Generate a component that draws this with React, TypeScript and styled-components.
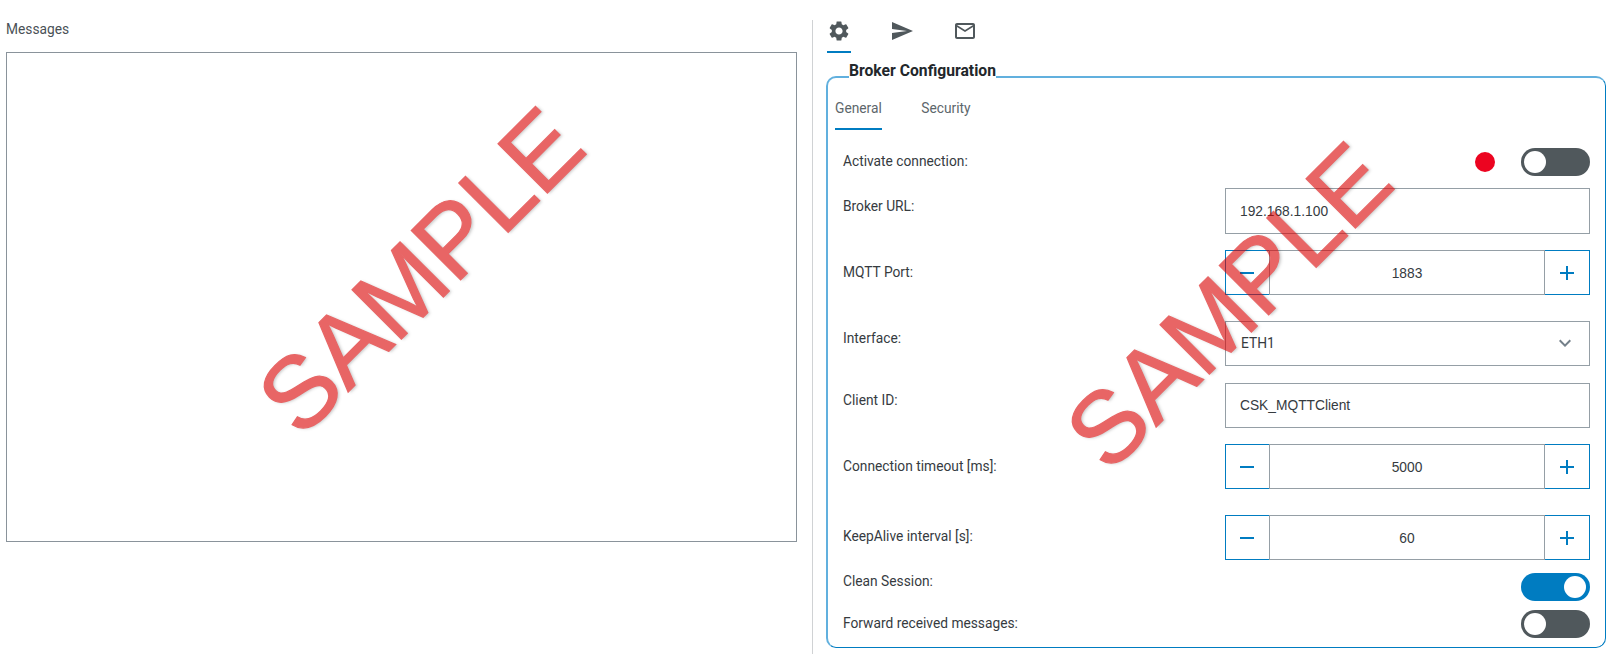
import React from "react";
import styled, { createGlobalStyle } from "styled-components";
import {
  MdAdd,
  MdExpandMore,
  MdMailOutline,
  MdRemove,
  MdSend,
  MdSettings,
} from "react-icons/md";

const BLUE = "#007cc1";
const SLATE = "#50585c";
const BORDER = "#959fa6";

const GlobalStyle = createGlobalStyle`
  *, *::before, *::after { box-sizing: border-box; }
  body {
    margin: 0;
    background: #fff;
    color: #363b3f;
    font: 13.77px/20px Roboto, "Liberation Sans", sans-serif;
  }
`;

const Page = styled.main`
  position: relative;
  display: flex;
  width: 1610px;
  height: 660px;
  overflow: hidden;
`;

const MessagesPane = styled.section`
  width: 797px;
  padding: 18px 0 0 6px;
`;

const MessagesTitle = styled.div`
  height: 34px;
  padding-top: 1px;
  color: #4a5156;
`;

const MessagesBox = styled.div`
  height: 490px;
  border: 1px solid #8a939b;
`;

const SettingsPane = styled.section`
  width: 794px;
  height: 634px;
  margin: 20px 0 0 15px;
  padding-left: 14px;
  border-left: 1px solid #d0d2d4;
`;

const IconTabs = styled.nav`
  display: flex;
  gap: 39px;
  height: 33px;
`;

const IconTab = styled.div<{ $active?: boolean }>`
  display: flex;
  width: 24px;
  height: 33px;
  border-bottom: 2px solid ${(p) => (p.$active ? BLUE : "transparent")};
  color: ${SLATE};
  svg {
    width: 24px;
    height: 24px;
    margin-top: -0.6px;
  }
`;

const Panel = styled.fieldset`
  height: 588px;
  margin: 7px 0 0 -1px;
  padding: 0 15px 0 7px;
  border: 1px solid ${BLUE};
  border-top: 2px solid #61b0de;
  border-left: 2px solid #61b0de;
  border-radius: 10px;
`;

const PanelTitle = styled.legend`
  height: 34px;
  margin-left: 14px;
  padding: 0;
  color: #22272b;
  font-size: 15.7px;
  font-weight: 700;
  line-height: 22px;
`;

const TextTabs = styled.nav`
  display: flex;
  gap: 39.5px;
  height: 33px;
  margin-top: 3px;
`;

const TextTab = styled.div<{ $active?: boolean }>`
  height: 33px;
  padding-top: 1px;
  border-bottom: 2px solid ${(p) => (p.$active ? BLUE : "transparent")};
  color: #5d666b;
`;

const Form = styled.div`
  margin-top: 18px;
  padding-left: 8px;
`;

const Row = styled.div<{ $height: number }>`
  display: flex;
  justify-content: space-between;
  align-items: flex-start;
  height: ${(p) => p.$height}px;
`;

const Label = styled.label<{ $top: number }>`
  margin-top: ${(p) => p.$top}px;
`;

const Control = styled.div<{ $top?: number }>`
  display: flex;
  align-items: center;
  gap: 26px;
  margin-top: ${(p) => p.$top ?? 0}px;
`;

const FieldFrame = styled.div`
  display: flex;
  justify-content: space-between;
  align-items: center;
  width: 365px;
  height: 45px;
  padding: 0 12px 1px 15px;
  border: 1px solid ${BORDER};
  svg {
    width: 24px;
    height: 24px;
    color: #74808a;
  }
`;

const TextField = styled(FieldFrame)<{ $height: number }>`
  height: ${(p) => p.$height}px;
  padding: 1px 12px 0 14px;
  font-family: "Liberation Sans", Arial, sans-serif;
`;

const Stepper = styled.div`
  display: flex;
  width: 365px;
  height: 45px;
`;

const StepButton = styled.div<{ $side: "left" | "right" }>`
  display: flex;
  justify-content: center;
  align-items: center;
  width: ${(p) => (p.$side === "left" ? 44 : 45)}px;
  padding-right: ${(p) => (p.$side === "left" ? 1 : 0)}px;
  border: 1px solid ${BLUE};
  border-${(p) => (p.$side === "left" ? "right" : "left")}: 0;
  color: ${BLUE};
  svg {
    width: 24px;
    height: 24px;
  }
`;

const StepValue = styled.div`
  display: flex;
  flex: 1;
  justify-content: center;
  align-items: center;
  padding-top: 2px;
  border: 1px solid ${BORDER};
  font-family: "Liberation Sans", Arial, sans-serif;
`;

const StatusDot = styled.span`
  width: 20px;
  height: 20px;
  border-radius: 50%;
  background: #ec0420;
`;

const Switch = styled.div<{ $on?: boolean }>`
  display: flex;
  justify-content: ${(p) => (p.$on ? "flex-end" : "flex-start")};
  align-items: center;
  width: 69px;
  height: 28px;
  padding: 0 4px 0 3.3px;
  border-radius: 14px;
  background: ${(p) => (p.$on ? BLUE : SLATE)};
  &::before {
    content: "";
    width: 22px;
    height: 22px;
    border-radius: 50%;
    background: #fff;
  }
`;

const Watermark = styled.div<{ $x: number; $y: number }>`
  position: absolute;
  left: ${(p) => p.$x}px;
  top: ${(p) => p.$y}px;
  height: 0;
  color: #d90000;
  font: 101.5px/0 "Liberation Sans", Arial, sans-serif;
  letter-spacing: -0.7px;
  opacity: 0.6;
  pointer-events: none;
  text-shadow: 1px 2px 3px rgba(0, 0, 0, 0.35);
  transform: rotate(-45deg);
  transform-origin: 0 0;
  white-space: nowrap;
  -webkit-text-stroke: 1.2px #d90000;
`;

function NumberInput({ value }: { value: number }) {
  return (
    <Stepper>
      <StepButton $side="left"><MdRemove /></StepButton>
      <StepValue>{value}</StepValue>
      <StepButton $side="right"><MdAdd /></StepButton>
    </Stepper>
  );
}

interface FieldProps {
  label: string;
  height: number;
  labelTop: number;
  controlTop?: number;
  children: React.ReactNode;
}

function Field({ label, height, labelTop, controlTop, children }: FieldProps) {
  return (
    <Row $height={height}>
      <Label $top={labelTop}>{label}</Label>
      <Control $top={controlTop}>{children}</Control>
    </Row>
  );
}

export default function App() {
  return (
    <>
      <GlobalStyle />
      <Page>
        <MessagesPane>
          <MessagesTitle>Messages</MessagesTitle>
          <MessagesBox />
        </MessagesPane>
        <SettingsPane>
          <IconTabs>
            <IconTab $active><MdSettings /></IconTab>
            <IconTab><MdSend /></IconTab>
            <IconTab><MdMailOutline /></IconTab>
          </IconTabs>
          <Panel>
            <PanelTitle>Broker Configuration</PanelTitle>
            <TextTabs>
              <TextTab $active>General</TextTab>
              <TextTab>Security</TextTab>
            </TextTabs>
            <Form>
              <Field label="Activate connection:" height={40} labelTop={3}>
                <StatusDot />
                <Switch />
              </Field>
              <Field label="Broker URL:" height={62} labelTop={8}>
                <TextField $height={46}>192.168.1.100</TextField>
              </Field>
              <Field label="MQTT Port:" height={71} labelTop={12}>
                <NumberInput value={1883} />
              </Field>
              <Field label="Interface:" height={62} labelTop={7}>
                <FieldFrame>ETH1<MdExpandMore /></FieldFrame>
              </Field>
              <Field label="Client ID:" height={61} labelTop={7}>
                <TextField $height={45}>CSK_MQTTClient</TextField>
              </Field>
              <Field label="Connection timeout [ms]:" height={71} labelTop={12}>
                <NumberInput value={5000} />
              </Field>
              <Field label="KeepAlive interval [s]:" height={56} labelTop={11}>
                <NumberInput value={60} />
              </Field>
              <Field label="Clean Session:" height={39} labelTop={0} controlTop={2}>
                <Switch $on />
              </Field>
              <Field label="Forward received messages:" height={28} labelTop={3}>
                <Switch />
              </Field>
            </Form>
          </Panel>
        </SettingsPane>
        <Watermark $x={276.4} $y={415.3}>SAMPLE</Watermark>
        <Watermark $x={1084.4} $y={450.3}>SAMPLE</Watermark>
      </Page>
    </>
  );
}
